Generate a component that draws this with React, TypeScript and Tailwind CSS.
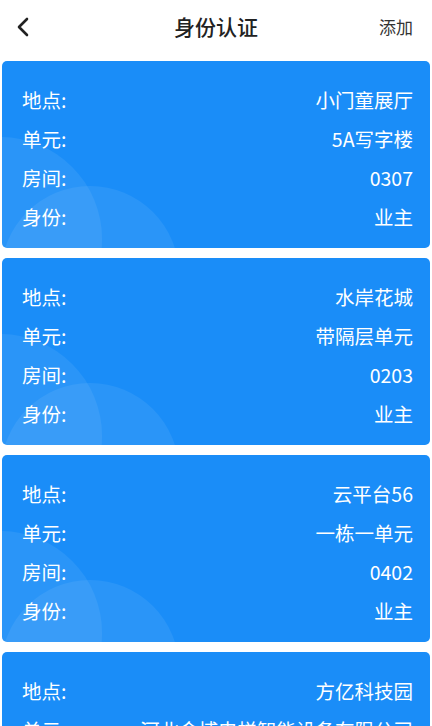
import React from "react";

type Item = { place: string; unit: string; room: string; role: string };

const items: Item[] = [
  { place: "小门童展厅", unit: "5A写字楼", room: "0307", role: "业主" },
  { place: "水岸花城", unit: "带隔层单元", room: "0203", role: "业主" },
  { place: "云平台56", unit: "一栋一单元", room: "0402", role: "业主" },
  { place: "方亿科技园", unit: "河北金博电梯智能设备有限公司", room: "0101", role: "业主" },
];

function Row({ label, value }: { label: string; value: string }) {
  return (
    <div className="relative flex h-[39px] items-center justify-between">
      <span>{label}</span>
      <span>{value}</span>
    </div>
  );
}

function Card({ item }: { item: Item }) {
  return (
    <div className="relative h-[187px] shrink-0 overflow-hidden rounded-[5px] bg-[#1a8df8] pl-[20px] pr-[17px] pt-[19px] pb-[12px] text-[19.5px] text-white">
      <div className="pointer-events-none absolute left-[-104px] top-[76px] h-[204px] w-[204px] rounded-full bg-white/[0.07]" />
      <div className="pointer-events-none absolute left-[-1px] top-[125px] h-[178px] w-[178px] rounded-full bg-white/[0.07]" />
      <Row label="地点:" value={item.place} />
      <Row label="单元:" value={item.unit} />
      <Row label="房间:" value={item.room} />
      <Row label="身份:" value={item.role} />
    </div>
  );
}

export default function App() {
  return (
    <div
      className="flex h-[726px] w-[432px] flex-col overflow-hidden bg-white"
      style={{ fontFamily: '"Noto Sans CJK SC", "Noto Sans", sans-serif' }}
    >
      <div className="grid h-[54px] shrink-0 grid-cols-[1fr_auto_1fr] items-center px-[15px]">
        <div className="flex items-center">
          <svg width="16" height="22" viewBox="0 0 16 22" fill="none">
            <path d="M12 3 L4 11 L12 19" stroke="#222" strokeWidth="2.6" strokeLinecap="round" strokeLinejoin="round" />
          </svg>
        </div>
        <span className="text-[21px] font-medium text-[#222]">身份认证</span>
        <div className="flex items-center justify-end pr-[4px]">
          <span className="text-[17px] text-[#333]">添加</span>
        </div>
      </div>
      <div className="flex flex-col gap-[10px] px-[2px] pt-[7px]">
        {items.map((it, i) => (
          <Card key={i} item={it} />
        ))}
      </div>
    </div>
  );
}
